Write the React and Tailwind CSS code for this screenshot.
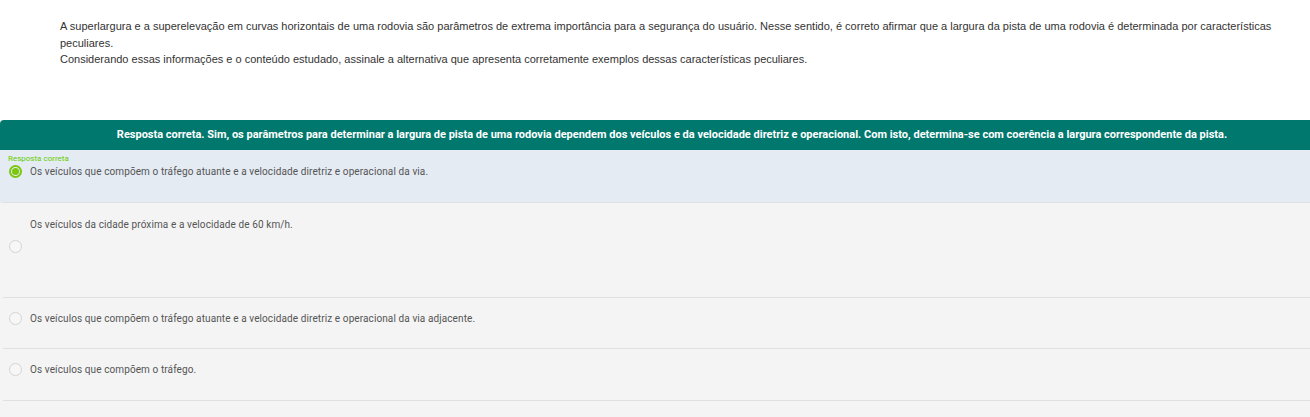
import { useState } from 'react'

const options = [
  { id: 'a', text: 'Os veículos que compõem o tráfego atuante e a velocidade diretriz e operacional da via.', h: 'h-[53px]' },
  { id: 'b', text: 'Os veículos da cidade próxima e a velocidade de 60 km/h.', h: 'h-[95px]' },
  { id: 'c', text: 'Os veículos que compõem o tráfego atuante e a velocidade diretriz e operacional da via adjacente.', h: 'h-[51px]' },
  { id: 'd', text: 'Os veículos que compõem o tráfego.', h: 'h-[52px]' },
]

function Radio({ checked }) {
  return checked ? (
    <span className="block w-[13px] h-[13px] rounded-full border-2 border-[#7ac70c] flex items-center justify-center shrink-0">
      <span className="block w-[7px] h-[7px] rounded-full bg-[#7ac70c]" />
    </span>
  ) : (
    <span className="block w-[13px] h-[13px] rounded-full border border-[#d4d4d4] bg-[#f7f7f7] shrink-0" />
  )
}

export default function App() {
  const [selected] = useState('a')

  return (
    <div className="w-[1310px] h-[417px] bg-white overflow-hidden font-['Roboto',sans-serif]">
      {/* Enunciado */}
      <div className="pl-[60px] pr-[30px] pt-[18px] h-[120px] text-[11px] leading-[16.5px] text-[#333] font-['Liberation_Sans',Arial,sans-serif]">
        <p>
          A superlargura e a superelevação em curvas horizontais de uma rodovia são parâmetros de extrema importância para a segurança do usuário. Nesse sentido, é correto afirmar que a largura da pista de uma rodovia é determinada por características peculiares.
        </p>
        <p>Considerando essas informações e o conteúdo estudado, assinale a alternativa que apresenta corretamente exemplos dessas características peculiares.</p>
      </div>

      {/* Feedback */}
      <div className="h-[30px] pl-[34px] bg-[#00786e] rounded-tl-[4px] flex items-center justify-center text-white font-bold text-[11px]">
        Resposta correta. Sim, os parâmetros para determinar a largura de pista de uma rodovia dependem dos veículos e da velocidade diretriz e operacional. Com isto, determina-se com coerência a largura correspondente da pista.
      </div>

      {/* Alternativas */}
      <div className="bg-[#f4f4f4] h-[267px]">
        {options.map((o) => {
          const isSel = o.id === selected
          return (
            <div key={o.id} className={`${o.h} ${isSel ? 'bg-[#e4ebf3]' : ''}`}>
              <div className="h-full ml-[3px] border-b border-[#e0e0e0] relative">
                {isSel && (
                  <p className="absolute left-[5px] top-[5px] text-[8px] leading-none text-[#66cc00]">Resposta correta</p>
                )}
                {o.id === 'b' ? (
                  <div className="h-full relative">
                    <p className="absolute left-[27px] top-[14px] text-[10px] text-[#555] tracking-[0.1px]">{o.text}</p>
                    <div className="absolute left-[6px] top-[37px]"><Radio checked={false} /></div>
                  </div>
                ) : (
                  <div className={`flex items-center gap-[8px] pl-[6px] ${isSel ? 'pt-[14px]' : 'pt-[13px]'}`}>
                    <Radio checked={isSel} />
                    <span className="text-[10px] text-[#555] tracking-[0.1px]">{o.text}</span>
                  </div>
                )}
              </div>
            </div>
          )
        })}
      </div>
    </div>
  )
}
